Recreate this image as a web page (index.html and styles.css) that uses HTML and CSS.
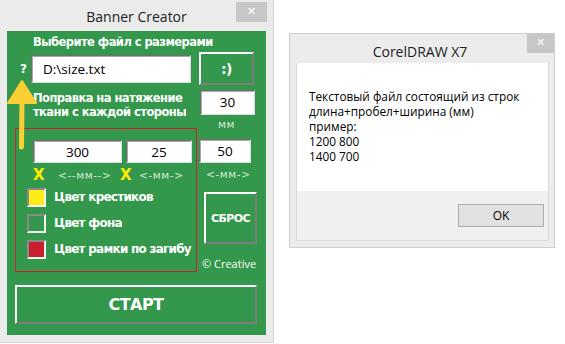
FILE: index.html
```html
<!DOCTYPE html>
<html lang="ru">
<head>
  <meta charset="UTF-8">
  <title>Banner Creator</title>
  <link rel="stylesheet" href="styles.css">
</head>
<body>
  <div class="desk">
    <div class="win">
      <div class="titlebar">
        <span class="title">Banner Creator</span>
        <span class="close">✕</span>
      </div>
      <div class="panel">
        <svg class="arrow" width="32" height="72" viewBox="0 0 32 72">
          <line x1="15" y1="20" x2="14.5" y2="68" stroke="#fccf34" stroke-width="5" stroke-linecap="round"/>
          <polygon points="15,2 1,24 29,24" fill="#fccf34" stroke="#fccf34" stroke-width="2" stroke-linejoin="round"/>
        </svg>
        <div class="head">Выберите файл с размерами</div>
        <div class="row file-row">
          <span class="q">?</span>
          <div class="field file">D:\size.txt</div>
          <div class="btn smile">:)</div>
        </div>
        <div class="row tension-row">
          <div class="label2">Поправка на натяжение<br>ткани с каждой стороны</div>
          <div class="field num tension">30</div>
        </div>
        <div class="unit unit-top">мм</div>
        <div class="main">
          <div class="frame">
            <div class="row size-row">
              <div class="field num w300">300</div>
              <div class="field num w25">25</div>
            </div>
            <div class="row mark-row">
              <span class="x x1">X</span>
              <span class="unit u1">&lt;--мм--&gt;</span>
              <span class="x x2">X</span>
              <span class="unit u2">&lt;-мм-&gt;</span>
            </div>
            <div class="swatches">
              <div class="swatch-row"><span class="swatch yellow"></span>Цвет крестиков</div>
              <div class="swatch-row"><span class="swatch green"></span>Цвет фона</div>
              <div class="swatch-row"><span class="swatch red"></span>Цвет рамки по загибу</div>
            </div>
          </div>
          <div class="side">
            <div class="field num w50">50</div>
            <div class="unit side-unit">&lt;-мм-&gt;</div>
            <div class="btn reset">СБРОС</div>
            <div class="copy">© Creative</div>
          </div>
        </div>
        <div class="btn start">СТАРТ</div>
      </div>
    </div>

    <div class="dialog">
      <div class="titlebar dlg-bar">
        <span class="title">CorelDRAW X7</span>
        <span class="close">✕</span>
      </div>
      <div class="dlg-body">
        <div class="dlg-text">
          Текстовый файл состоящий из строк<br>
          длина+пробел+ширина (мм)<br>
          пример:<br>
          1200 800<br>
          1400 700
        </div>
        <div class="dlg-foot">
          <div class="ok">OK</div>
        </div>
      </div>
    </div>
  </div>
</body>
</html>
```
FILE: styles.css
```css
body {
  margin: 0;
  background: #fff;
  font-family: 'Open Sans', sans-serif;
}
.desk {
  display: flex;
  align-items: flex-start;
  width: 565px;
  height: 344px;
}
.win {
  width: 273px;
  height: 342px;
  background: #ebebeb;
  border-right: 1px solid #d4d4d4;
  border-bottom: 1px solid #d4d4d4;
}
.titlebar {
  height: 31px;
  display: flex;
  position: relative;
  justify-content: center;
}
.title {
  font-size: 14px;
  color: #222;
  line-height: 34px;
}
.close {
  position: absolute;
  top: 2px;
  right: 6px;
  width: 31px;
  height: 20px;
  background: #c7c7c7;
  color: #fff;
  font-size: 11px;
  font-family: 'DejaVu Sans', sans-serif;
  text-align: center;
  line-height: 20px;
}
.panel {
  position: relative;
  margin-left: 7px;
  width: 259px;
  height: 304px;
  box-sizing: border-box;
  padding: 3px 9px 0 8px;
  background: #33984c;
  color: #fff;
  font-family: 'DejaVu Sans', sans-serif;
  font-weight: bold;
  font-size: 11.5px;
  letter-spacing: -0.55px;
}
.arrow {
  position: absolute;
  left: 0;
  top: 48px;
}
.head {
  height: 17px;
  line-height: 17px;
  padding-left: 18px;
}
.row {
  display: flex;
  align-items: center;
}
.field {
  background: #fff;
  color: #000;
  box-sizing: border-box;
  border: 1px solid;
  border-color: #6e6e6e #dcdcdc #dcdcdc #6e6e6e;
  box-shadow: inset 1px 1px #a8a8a8;
  font-family: 'Open Sans', sans-serif;
  font-weight: normal;
  font-size: 13.5px;
  letter-spacing: 0;
}
.num {
  text-align: center;
}
.btn {
  box-sizing: border-box;
  border: 2px solid;
  border-color: #fff #7d7d7d #7d7d7d #fff;
  display: flex;
  align-items: center;
  justify-content: center;
  color: #fff;
}
.file-row {
  margin-top: 1px;
  height: 33px;
}
.q {
  width: 16px;
  padding-left: 5px;
  box-sizing: border-box;
  font-size: 12px;
}
.file {
  width: 160px;
  height: 28px;
  line-height: 26px;
  padding-left: 11px;
}
.smile {
  margin-left: 8px;
  width: 55px;
  height: 33px;
  font-size: 14px;
}
.tension-row {
  margin-top: 5px;
  justify-content: space-between;
  height: 25px;
}
.label2 {
  padding-left: 18px;
  line-height: 14px;
  margin-top: 4px;
}
.tension {
  width: 55px;
  height: 25px;
  line-height: 23px;
  margin-right: 2px;
}
.unit {
  color: #d6ead9;
  font-family: 'DejaVu Sans', sans-serif;
  font-weight: normal;
  font-size: 10.5px;
  letter-spacing: 0.6px;
}
.unit-top {
  text-align: right;
  padding-right: 22px;
  height: 13px;
  line-height: 18px;
}
.main {
  display: flex;
}
.frame {
  width: 182px;
  height: 144px;
  box-sizing: border-box;
  border: 1px solid #d0202a;
  padding: 11px 0 0 17px;
}
.size-row {
  gap: 4px;
}
.w300 {
  width: 89px;
  height: 23px;
  line-height: 22px;
}
.w25 {
  width: 66px;
  height: 23px;
  line-height: 22px;
}
.mark-row {
  height: 22px;
}
.mark-row > span {
  flex: none;
}
.x {
  color: #ffee00;
  font-size: 15px;
  padding-top: 2px;
}
.x1 {
  width: 25px;
}
.x2 {
  width: 19px;
}
.u1 {
  width: 62px;
  padding-top: 1px;
}
.u2 {
  padding-top: 1px;
}
.swatches {
  margin-left: -6px;
  margin-top: -1px;
}
.swatch-row {
  display: flex;
  align-items: center;
  height: 26px;
  font-size: 12px;
  letter-spacing: -0.75px;
  gap: 8px;
}
.swatch {
  width: 19px;
  height: 19px;
  box-sizing: border-box;
  border: 2px solid;
  border-color: #8a8a8a #f4f4f4 #f4f4f4 #8a8a8a;
}
.yellow { background: #ffea1a; }
.green { background: #33984c; }
.red { background: #c8202e; }
.side {
  width: 58px;
  padding-left: 2px;
  padding-top: 11px;
}
.w50 {
  width: 52px;
  height: 24px;
  line-height: 23px;
}
.side-unit {
  height: 20px;
  line-height: 22px;
  padding-left: 7px;
}
.reset {
  margin: 9px 0 0 5px;
  width: 53px;
  height: 52px;
  font-size: 11px;
}
.copy {
  margin-top: 12px;
  padding-left: 3px;
  font-family: 'Open Sans', sans-serif;
  font-weight: normal;
  font-size: 11px;
  letter-spacing: 0;
}
.start {
  margin-top: 13px;
  width: 242px;
  height: 39px;
  font-size: 16px;
}
.dialog {
  margin: 33px 0 0 15px;
  width: 266px;
  height: 215px;
  box-sizing: border-box;
  border: 1px solid #cfcfcf;
  background: #ececec;
}
.dlg-bar {
  height: 29px;
}
.dlg-bar .title {
  line-height: 36px;
  padding-right: 4px;
}
.dlg-bar .close {
  top: -1px;
  right: 0;
  width: 27px;
}
.dlg-body {
  margin: 0 5px 0 6px;
  height: 177px;
  border: 1px solid #dadada;
  border-top: none;
  background: #f0f0f0;
}
.dlg-text {
  background: #fff;
  height: 128px;
  box-sizing: border-box;
  padding: 26px 0 0 12px;
  font-size: 11.8px;
  line-height: 15px;
  color: #000;
}
.dlg-foot {
  display: flex;
  justify-content: flex-end;
  padding: 13px 4px 0 0;
}
.ok {
  width: 86px;
  height: 23px;
  box-sizing: border-box;
  border: 1px solid #adadad;
  background: #e1e1e1;
  font-size: 12px;
  line-height: 21px;
  text-align: center;
  color: #000;
}
```
